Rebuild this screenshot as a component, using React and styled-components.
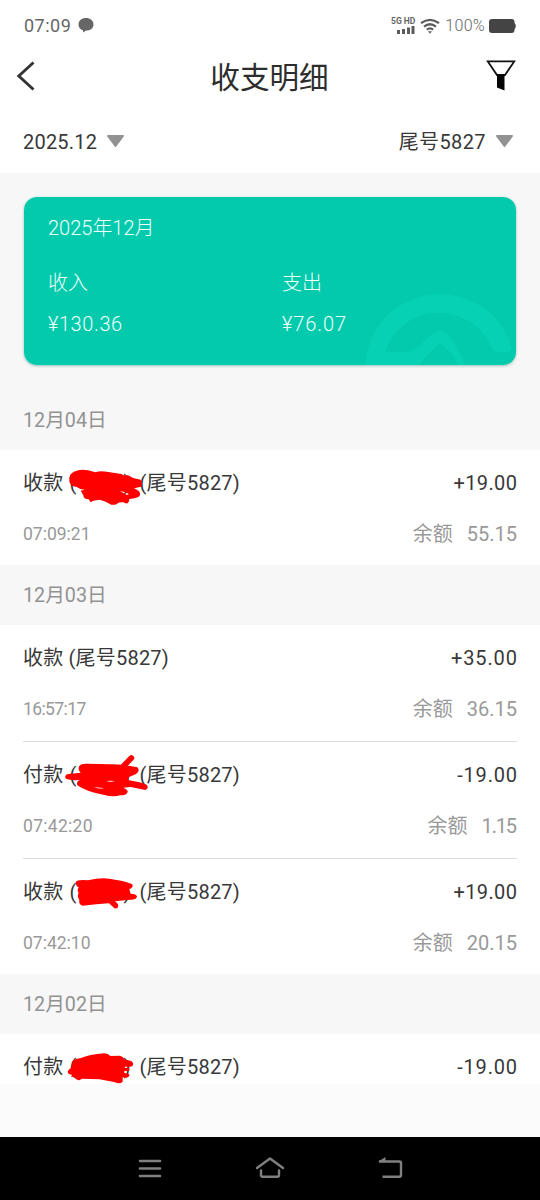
import React from 'react';
import styled, { createGlobalStyle } from 'styled-components';

const GlobalStyle = createGlobalStyle`
* { box-sizing: border-box; }
body {
    margin: 0;
    background-color: #fbfbfb;
    font-family: Roboto, "Noto Sans CJK SC", sans-serif;
    color: #383838;
}
svg { display: block; flex: none; }
`;

const Page = styled.div`
width: 540px;
height: 1200px;
display: flex;
flex-direction: column;
overflow: hidden;
`;

const StatusBar = styled.div`
height: 52px;
flex: none;
padding: 0 24px 0 24px;
display: flex;
justify-content: space-between;
align-items: center;
background-color: #fff;
color: #666;
`;

const StatusSide = styled.div`
display: flex;
align-items: center;
gap: ${(props) => props.gap}px;
`;

const Clock = styled.span`
font-size: 18px;
line-height: 20px;
letter-spacing: 0.5px;
`;

const Signal = styled.div`
width: 26px;
padding-bottom: 2px;
display: flex;
flex-direction: column;
align-items: flex-end;
font-size: 8.5px;
font-weight: 700;
line-height: 9px;
white-space: nowrap;
`;

const Percent = styled.span`
font-size: 16px;
font-weight: 300;
line-height: 20px;
letter-spacing: 0.3px;
margin-right: -1px;
`;

const TitleBar = styled.div`
height: 50px;
flex: none;
padding: 0 24px 2px 16px;
display: flex;
justify-content: space-between;
align-items: center;
background-color: #fff;
`;

const Title = styled.h1`
margin: 4px 0 0 18px;
font-size: 29.6px;
font-weight: 400;
line-height: 46px;
color: #2d2d2d;
`;

const FilterBar = styled.div`
height: 71px;
flex: none;
padding: 5px 26px 0 23px;
display: flex;
justify-content: space-between;
align-items: flex-start;
background-color: #fff;
`;

const Select = styled.div`
display: flex;
align-items: center;
gap: 9px;
font-size: 20px;
line-height: 70px;
height: 70px;
letter-spacing: ${(props) => props.spacing || 0}px;
`;

const SelectArrow = styled.svg`
margin-top: -2px;
`;

const CardArea = styled.div`
height: 217px;
flex: none;
padding: 24px 24px 0;
background-color: #f7f7f7;
`;

const Card = styled.div`
position: relative;
height: 168px;
padding: 15px 24px;
border-radius: 13px;
overflow: hidden;
background-color: #03caac;
color: #f0fffc;
font-size: 20px;
font-weight: 300;
`;

const CardShadow = styled.div`
border-radius: 13px;
box-shadow: 0 1px 3px rgba(0, 110, 90, 0.4);
`;

const CardMark = styled.svg`
position: absolute;
right: 0;
bottom: 0;
`;

const CardMonth = styled.div`
line-height: 33px;
`;

const Totals = styled.div`
margin-top: 17px;
display: grid;
grid-template-columns: 234px 1fr;
`;

const Total = styled.div`
line-height: ${(props) => (props.sum ? 40 : 42)}px;
letter-spacing: ${(props) => props.spacing || 0}px;
`;

const DateHeader = styled.div`
height: 60px;
flex: none;
padding-left: 23px;
background-color: #f7f7f7;
color: #929292;
font-size: 19.7px;
line-height: 62px;
`;

const List = styled.div`
flex: none;
padding: 0 23px;
background-color: #fff;
`;

const Record = styled.div`
height: ${(props) => (props.cut ? 50 : props.divided ? 117 : 115)}px;
overflow: hidden;
border-bottom: ${(props) => (props.divided ? '1px solid #dcdcdc' : 'none')};
`;

const RecordLine = styled.div`
display: flex;
justify-content: space-between;
align-items: center;
height: ${(props) => (props.sub ? 37 : 65)}px;
color: ${(props) => (props.sub ? '#999' : '#383838')};
font-size: 20px;
line-height: 24px;
white-space: pre;
`;

const Name = styled.span`
display: flex;
align-items: center;
height: 24px;
letter-spacing: 0.2px;
`;

const Masked = styled.span`
position: relative;
width: 61px;
height: 24px;
margin: 0 9px 0 1px;
display: flex;
justify-content: space-between;
`;

const MaskStroke = styled.svg`
position: absolute;
left: -10px;
top: -13px;
`;

const Amount = styled.span`
height: 24px;
letter-spacing: ${(props) => props.spacing || 0}px;
margin-right: -${(props) => props.spacing || 0}px;
`;

const Time = styled.span`
font-size: 17.5px;
height: 24px;
letter-spacing: ${(props) => props.spacing || 0}px;
`;

const Balance = styled.span`
display: flex;
gap: 14px;
height: 24px;
`;

const BalanceValue = styled.span`
letter-spacing: ${(props) => props.spacing || 0}px;
margin-right: ${(props) => -(props.spacing || 0)}px;
`;

const BottomSpace = styled.div`
flex: 1;
background-color: #fbfbfb;
`;

const NavBar = styled.div`
height: 63px;
flex: none;
display: flex;
justify-content: center;
align-items: center;
gap: 90px;
background-color: #000;
`;

// each scribble is drawn in a box of 285 x 150 units, shown at a third of that
const masks = {
    a: (
        <path
            fill="#f00"
            fillRule="evenodd"
            d="M28 67Q26 48 42 41Q60 32 84 37L107 43Q120 37 145 42L184 48L190 52L204 52L220 60L242 65Q249 76 243 86L222 91Q243 99 240 112Q234 122 208 123Q207 138 197 136L190 133Q178 132 171 137Q160 144 148 137L137 131L119 125L100 128L92 133L86 124Q70 124 70 112L62 98L74 95Q60 95 50 87L37 84Q27 76 28 67ZM180 99L190 101L207 108L201 111Z"
        />
    ),
    b: (
        <g>
            <path
                fill="#f00"
                fillRule="evenodd"
                d="M58 48Q64 40 80 41L150 43Q185 42 232 52Q242 62 228 72L206 82L204 90Q245 97 260 104Q268 114 256 120L212 111L190 113Q207 120 202 128Q196 137 180 136Q160 142 130 134Q80 126 52 106Q48 94 60 90Q22 92 16 84Q14 74 25 72L62 68Q52 58 58 48ZM102 112L112 115L131 116L124 113ZM138 93Q152 97 166 93Q152 92 138 93Z"
            />
            <path d="M185 54L214 24" stroke="#f00" strokeWidth="17" strokeLinecap="round" />
        </g>
    ),
    c: (
        <path
            fill="#f00"
            d="M48 44Q52 37 84 40Q130 28 165 38Q205 44 217 52Q221 62 208 67L212 80Q230 80 231 89Q228 99 210 98L165 103Q178 112 174 121Q167 128 160 121L147 109Q110 112 68 116Q55 112 58 98Q50 88 56 78Q50 70 56 61Q46 57 48 44Z"
        />
    ),
    d: (
        <path
            fill="#f00"
            d="M23 89Q26 80 34 78L38 59Q47 49 61 49Q88 37 133 34Q145 35 151 42L180 41Q190 43 193 52L214 57Q223 64 217 73L206 75Q193 71 194 78L208 77V86L193 87V93L207 96Q211 103 200 107L188 106L188 119Q180 127 165 121L119 112L66 110L58 115Q48 115 45 106L33 104L36 98Q24 98 23 89Z"
        />
    ),
};

const groups = [
    {
        date: '12月04日',
        items: [{ type: '收款', mask: 'a', amount: '+19.00', amountSpacing: 0.4, time: '07:09:21', balance: '55.15' }],
    },
    {
        date: '12月03日',
        items: [
            { type: '收款', amount: '+35.00', amountSpacing: 0.9, time: '16:57:17', timeSpacing: -0.6, balance: '36.15', divided: true },
            { type: '付款', mask: 'b', amount: '-19.00', amountSpacing: 0.8, time: '07:42:20', timeSpacing: 0.3, balance: '1.15', balanceSpacing: -1.2, divided: true },
            { type: '收款', mask: 'c', amount: '+19.00', amountSpacing: 0.4, time: '07:42:10', balance: '20.15' },
        ],
    },
    {
        date: '12月02日',
        items: [{ type: '付款', mask: 'd', amount: '-19.00', amountSpacing: 0.8, cut: true }],
    },
];

const Arrow = () => (
    <SelectArrow width="19" height="13" viewBox="0 0 19 13">
        <path d="M2 1H17L9.5 11Z" fill="#929292" stroke="#929292" strokeWidth="2" strokeLinejoin="round" />
    </SelectArrow>
);

const RecordRow = ({ item }) => (
    <Record divided={item.divided ? 1 : 0} cut={item.cut ? 1 : 0}>
        <RecordLine>
            <Name>
                {item.type + ' '}
                {item.mask && (
                    <Masked>
                        <span>(</span>
                        <span>)</span>
                        <MaskStroke width="95" height="50" viewBox="0 0 285 150">
                            {masks[item.mask]}
                        </MaskStroke>
                    </Masked>
                )}
                (尾号5827)
            </Name>
            <Amount spacing={item.amountSpacing}>{item.amount}</Amount>
        </RecordLine>
        {!item.cut && (
            <RecordLine sub={1}>
                <Time spacing={item.timeSpacing}>{item.time}</Time>
                <Balance>
                    <span>余额</span>
                    <BalanceValue spacing={item.balanceSpacing}>{item.balance}</BalanceValue>
                </Balance>
            </RecordLine>
        )}
    </Record>
);

const App = () => (
    <>
        <GlobalStyle />
        <Page>
            <StatusBar>
                <StatusSide gap={7}>
                    <Clock>07:09</Clock>
                    <svg width="16" height="16" viewBox="0 0 16 16" fill="#666">
                        <path d="M8 0C12.2 0 15.5 2.6 15.5 6.4S12.2 12.6 8 12.6L5 14.5V12.2C2.3 11.4 .5 9.4 .5 6.4.5 2.6 3.8 0 8 0Z" />
                    </svg>
                </StatusSide>
                <StatusSide gap={5}>
                    <Signal>
                        5G HD
                        <svg width="19" height="8" viewBox="0 0 19 8" fill="#5c5c5c">
                            <path d="M1 4h3v4H1zM6 3h3v5H6zM11 1.5h3V8h-3zM15.5 0h3v8h-3z" />
                        </svg>
                    </Signal>
                    <svg width="20" height="16" viewBox="0 0 20 16" fill="none" stroke="#5c5c5c" strokeWidth="2.2">
                        <path d="M1 5.2Q10-1.6 19 5.2M4 8.6Q10 3.9 16 8.6M6.8 11.7Q10 9 13.2 11.7" />
                        <path d="M8 13.2H12L10 15.7Z" fill="#5c5c5c" stroke="none" />
                    </svg>
                    <Percent>100%</Percent>
                    <svg width="27" height="14" viewBox="0 0 27 14" fill="#444">
                        <rect width="25.5" height="14" rx="3" />
                        <path d="M24 3.5Q26.8 4 26.8 7T24 10.5Z" />
                    </svg>
                </StatusSide>
            </StatusBar>
            <TitleBar>
                <svg width="19" height="30" viewBox="0 0 19 30" fill="none" stroke="#333" strokeWidth="2.9">
                    <path d="M17.5 1.5L2.8 15L17.5 28.5" />
                </svg>
                <Title>收支明细</Title>
                <svg width="30" height="32" viewBox="0 0 30 32">
                    <path d="M1.8 1.4H28.2L19 15H11Z" fill="none" stroke="#111" strokeWidth="1.8" />
                    <path d="M11 14.5H18.5V30.5L11 27.5Z" fill="#050505" />
                </svg>
            </TitleBar>
            <FilterBar>
                <Select spacing={0.2}>
                    2025.12
                    <Arrow />
                </Select>
                <Select spacing={0.4}>
                    尾号5827
                    <Arrow />
                </Select>
            </FilterBar>
            <CardArea>
                <CardShadow>
                    <Card>
                        <CardMark width="152" height="73" viewBox="0 0 152 73" fill="#07d1b4">
                            <path d="M1 77A75 75 0 0 1 147 53Q149 60 142 60H134Q129 60 127 54A57 57 0 0 0 21 60H38Q50 60 56 53L68 42Q76 35 84 42Q91 49 101 73H94Q85 55 76 52Q70 54 53 77Z" />
                        </CardMark>
                        <CardMonth>2025年12月</CardMonth>
                        <Totals>
                            <Total>收入</Total>
                            <Total>支出</Total>
                            <Total sum={1} spacing={0.6}>¥130.36</Total>
                            <Total sum={1} spacing={0.9}>¥76.07</Total>
                        </Totals>
                    </Card>
                </CardShadow>
            </CardArea>
            {groups.map((group) => (
                <React.Fragment key={group.date}>
                    <DateHeader>{group.date}</DateHeader>
                    <List>
                        {group.items.map((item) => (
                            <RecordRow key={item.time || group.date} item={item} />
                        ))}
                    </List>
                </React.Fragment>
            ))}
            <BottomSpace />
            <NavBar>
                <svg width="30" height="26" viewBox="0 0 30 26" stroke="#808080" strokeWidth="2.6" strokeLinecap="round">
                    <path d="M5 5H25M5 12.5H25M5 20H25" />
                </svg>
                <svg width="30" height="26" viewBox="0 0 30 26" fill="none" stroke="#808080" strokeWidth="2.4" strokeLinecap="round" strokeLinejoin="round">
                    <path d="M2 12L15 2.5L28 12M6 14.5V19Q6 20.7 7.7 20.7H22.3Q24 20.7 24 19V14.5" />
                </svg>
                <svg width="30" height="26" viewBox="0 0 30 26" fill="none" stroke="#808080" strokeWidth="2.4">
                    <path d="M7.5 20.7H24.5Q26 20.7 26 19V7Q26 5.5 24.5 5.5H4" />
                    <path d="M3 5.7L10.5 1V5.7Z" fill="#808080" stroke="none" />
                </svg>
            </NavBar>
        </Page>
    </>
);

export default App;
